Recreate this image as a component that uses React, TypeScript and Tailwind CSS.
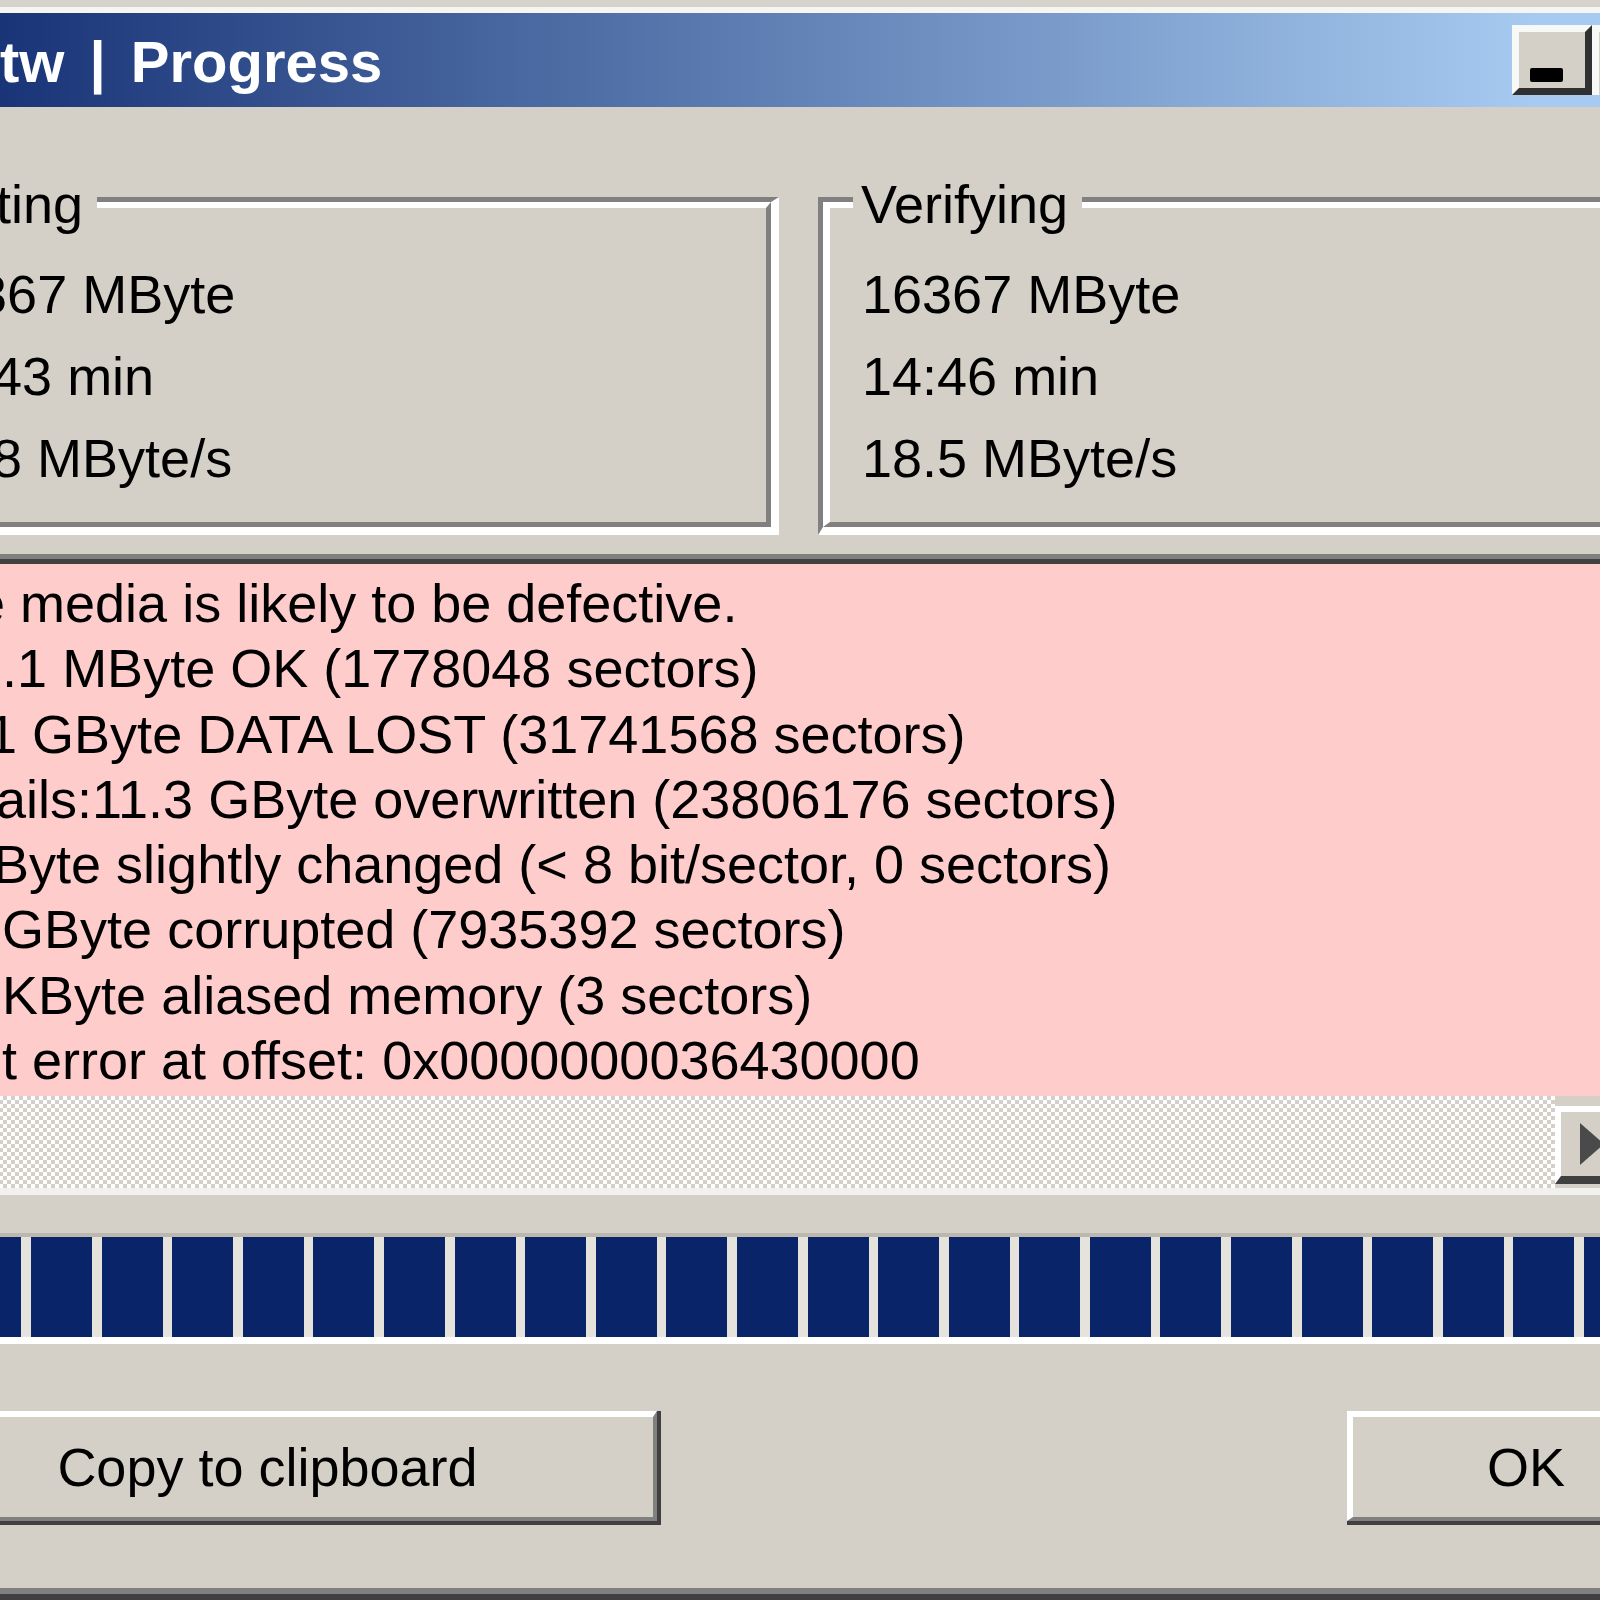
import React from "react";

const logLines = [
  "The media is likely to be defective.",
  "868.1 MByte OK (1778048 sectors)",
  "15.1 GByte DATA LOST (31741568 sectors)",
  "Details:11.3 GByte overwritten (23806176 sectors)",
  "0 KByte slightly changed (< 8 bit/sector, 0 sectors)",
  "3.7 GByte corrupted (7935392 sectors)",
  "1.5 KByte aliased memory (3 sectors)",
  "First error at offset: 0x0000000036430000",
];

function Group({ title, rows }: { title: string; rows: string[] }) {
  return (
    <div className="relative w-[906px] h-[338px] shrink-0 border-t-[5px] border-l-[5px] border-r-[8px] border-b-[8px] border-t-[#808080] border-l-[#808080] border-r-white border-b-white">
      <div className="h-full border-t-[6px] border-l-[7px] border-r-[5px] border-b-[5px] border-t-white border-l-white border-r-[#808080] border-b-[#808080] pl-[32px] pt-[45px]">
        {rows.map((r) => (
          <div key={r} className="text-[54px] leading-[82px] whitespace-nowrap">
            {r}
          </div>
        ))}
      </div>
      <div className="absolute top-[-25px] left-[30px] pl-[8px] pr-[14px] bg-[#d4d0c8] text-[54px] leading-[54px] whitespace-nowrap">
        {title}
      </div>
    </div>
  );
}

function Button({ label, className }: { label: string; className: string }) {
  return (
    <div className={"h-[114px] shrink-0 border-r-[4px] border-b-[4px] border-[#404040] " + className}>
      <div className="h-full flex items-center justify-center border-t-[6px] border-l-[6px] border-t-white border-l-white border-r-[4px] border-b-[4px] border-r-[#808080] border-b-[#808080] bg-[#d4d0c8] text-[54px] leading-[54px] whitespace-nowrap">
        {label}
      </div>
    </div>
  );
}

export default function App() {
  const blocks = Array.from({ length: 26 });
  return (
    <div className="w-[1600px] h-[1600px] overflow-hidden bg-[#d4d0c8] text-black font-['Liberation_Sans',Arial,sans-serif]">
      <div className="ml-[-170px] w-[1937px] flex flex-col">
        {/* window top edge */}
        <div className="h-[7px] bg-[#d6d3cc]" />
        <div className="h-[6px] bg-[#f6f5f2]" />
        {/* title bar */}
        <div className="h-[94px] flex bg-[linear-gradient(to_right,#0a246a,#a6caf0_88%)]">
          <div className="w-[1682px] shrink-0 pl-[12px] pt-[20px] text-white font-bold text-[58px] leading-[58px] whitespace-nowrap [word-spacing:9px]">
            H2testw | Progress
          </div>
          <div className="mt-[12px] w-[80px] h-[70px] shrink-0 border-t-[7px] border-l-[7px] border-t-[#f8f8f6] border-l-[#f8f8f6] border-r-[7px] border-b-[7px] border-r-[#303030] border-b-[#303030] bg-[#d4d0c8] pl-[11px] pt-[36px]">
            <div className="w-[33px] h-[14px] bg-black rounded-[2px]" />
          </div>
          <div className="mt-[12px] w-[80px] h-[70px] shrink-0 border-t-[7px] border-l-[7px] border-t-[#f8f8f6] border-l-[#f8f8f6] bg-[#d4d0c8]" />
        </div>

        {/* groups */}
        <div className="mt-[90px] px-[43px] flex gap-[39px]">
          <Group title="Writing" rows={["16367 MByte", "13:43 min", "19.8 MByte/s"]} />
          <Group title="Verifying" rows={["16367 MByte", "14:46 min", "18.5 MByte/s"]} />
        </div>

        {/* log box */}
        <div className="mt-[19px] mx-[43px] border-t-[5px] border-l-[5px] border-[#808080] border-b-[7px] border-b-[#f2f1ee]">
          <div className="border-t-[5px] border-l-[5px] border-[#404040]">
            <div className="h-[532px] bg-[#ffcccc] pl-[29px] pt-[7px]">
              {logLines.map((l) => (
                <div key={l} className="text-[54px] leading-[65.3px] whitespace-nowrap">
                  {l}
                </div>
              ))}
            </div>
            <div className="h-[92px] flex">
              <div className="w-[1672px] shrink-0 bg-[repeating-conic-gradient(#ffffff_0_25%,#d4d0c8_0_50%)] bg-[length:8px_8px]" />
              <div className="w-[84px] shrink-0 mt-[10px] mb-[4px] border-t-[6px] border-l-[6px] border-t-white border-l-white border-b-[8px] border-b-[#404040] bg-[#d4d0c8] flex items-center pl-[19px]">
                <svg width="26" height="42" viewBox="0 0 26 42">
                  <polygon points="0,0 24,21 0,42" fill="#4a4a4a" />
                </svg>
              </div>
            </div>
          </div>
        </div>

        {/* progress bar */}
        <div className="mt-[38px] mx-[43px] border-t-[4px] border-t-[#bcb8b0] border-b-[7px] border-b-white bg-[#e6e3dc]">
          <div className="h-[100px] flex gap-[9.6px] pl-[87.4px]">
            {blocks.map((_, i) => (
              <div key={i} className="w-[61px] h-full shrink-0 bg-[#0a246a]" />
            ))}
          </div>
        </div>

        {/* buttons */}
        <div className="mt-[67px] px-[43px] flex">
          <Button label="Copy to clipboard" className="ml-[3px] w-[785px]" />
          <Button label="OK" className="ml-[686px] w-[360px]" />
        </div>

        <div className="mt-[63px] h-[6px] bg-[#808080]" />
        <div className="h-[6px] bg-[#404040]" />
      </div>
    </div>
  );
}
